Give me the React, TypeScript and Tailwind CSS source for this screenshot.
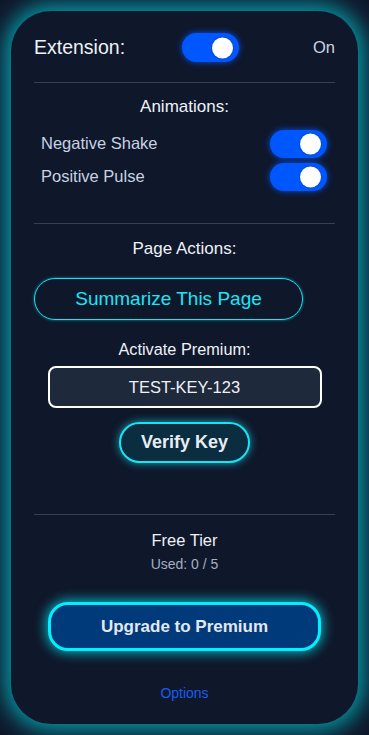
import React from "react";

function Toggle({ className = "" }: { className?: string }) {
  return (
    <div
      className={`relative h-[28px] w-[57px] shrink-0 rounded-full bg-[#0057ff] shadow-[0_0_6px_rgba(0,87,255,0.9)] ${className}`}
    >
      <div className="absolute right-[6px] top-1/2 h-[21px] w-[21px] -translate-y-1/2 rounded-full bg-white shadow-[0_0_2px_rgba(0,0,0,0.4)]" />
    </div>
  );
}

export default function App() {
  return (
    <div
      className="min-h-[735px] w-full bg-[#0f172a] p-[11px]"
      style={{ fontFamily: '"Liberation Sans", Arial, sans-serif' }}
    >
      <div className="flex h-[713px] w-full flex-col rounded-[40px] bg-[#0f172a] px-[23px] pt-[22px] shadow-[0_0_22px_6px_rgba(0,230,240,0.65)]">
        {/* Extension row */}
        <div className="flex h-[29px] items-center">
          <span className="text-[19.5px] text-[#eef2f7]">Extension:</span>
          <Toggle className="ml-[57px] h-[29px]" />
          <span className="ml-auto text-[16.5px] text-[#cbd5e1]">On</span>
        </div>

        <div className="mt-[20px] h-px w-full bg-[#334155]" />

        <div className="mt-[15px] text-center text-[17px] leading-[18px] text-[#eef2f7]">
          Animations:
        </div>

        <div className="mt-[14px] flex flex-col gap-[6px] pl-[7px] pr-[8px]">
          <div className="flex h-[27px] items-center justify-between">
            <span className="text-[16.5px] text-[#c7d2e3]">Negative Shake</span>
            <Toggle className="h-[27px]" />
          </div>
          <div className="flex h-[27px] items-center justify-between">
            <span className="text-[16.5px] text-[#c7d2e3]">Positive Pulse</span>
            <Toggle className="h-[27px]" />
          </div>
        </div>

        <div className="mt-[33px] h-px w-full bg-[#334155]" />

        <div className="mt-[16px] text-center text-[17px] leading-[18px] text-[#eef2f7]">
          Page Actions:
        </div>

        <button className="mt-[20px] flex h-[42px] w-[269px] items-center justify-center rounded-full border border-[#19e3f5] text-[19px] text-[#19e6f7] shadow-[0_0_3px_rgba(25,227,245,0.6)]">
          Summarize This Page
        </button>

        <div className="mt-[20px] text-center text-[16.3px] leading-[18px] text-[#eef2f7]">
          Activate Premium:
        </div>

        <div className="mx-auto mt-[8px] flex h-[42px] w-[274px] items-center justify-center rounded-[8px] border-2 border-white bg-[#1e293b] text-[16.5px] text-[#eef2f7]">
          TEST-KEY-123
        </div>

        <button className="mx-auto mt-[14px] flex h-[41px] w-[131px] items-center justify-center rounded-full border-2 border-[#19e3f5] bg-[#0b2d40] text-[18px] font-bold text-[#e8edf3] shadow-[0_0_8px_rgba(25,227,245,0.7)]">
          Verify Key
        </button>

        <div className="mt-[51px] h-px w-full bg-[#334155]" />

        <div className="mt-[16px] text-center text-[16.5px] leading-[18px] text-[#eef2f7]">
          Free Tier
        </div>
        <div className="mt-[8px] text-center text-[14px] leading-[15px] text-[#a3afc2]">
          Used: 0 / 5
        </div>

        <button className="mx-auto mt-[30px] flex h-[49px] w-[273px] items-center justify-center rounded-[20px] border-[3px] border-[#00f0ff] bg-[#003a7a] text-[17px] font-bold text-[#e2e8f0] shadow-[0_0_12px_2px_rgba(0,240,255,0.7)]">
          Upgrade to Premium
        </button>

        <div className="mt-[34px] text-center text-[14px] leading-[16px] text-[#1a5cf0]">
          Options
        </div>
      </div>
    </div>
  );
}
